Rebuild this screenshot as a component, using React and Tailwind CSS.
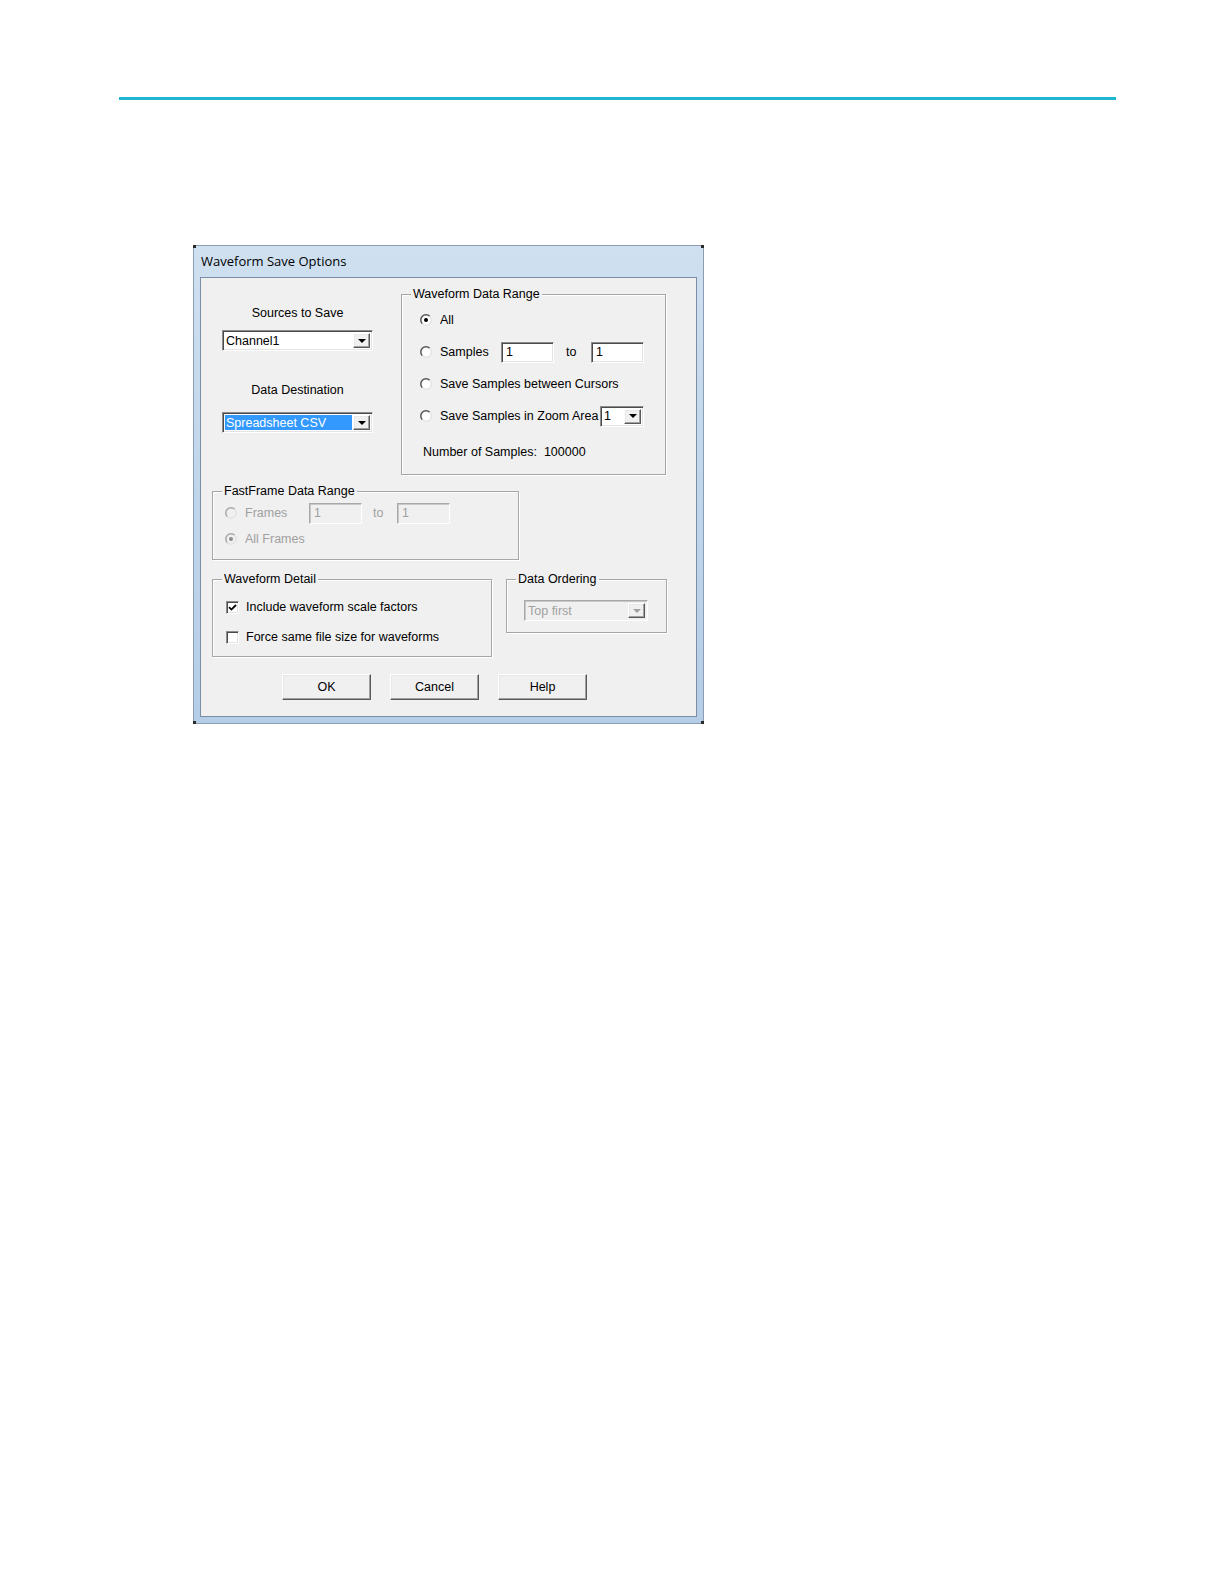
import React from "react";

const ui = { fontFamily: '"Liberation Sans", Arial, sans-serif' };
const title = { fontFamily: '"Open Sans", "Noto Sans", sans-serif' };

// classic win32 sunken edit field
const sunken =
  "border border-t-[#8c8c8c] border-l-[#8c8c8c] border-b-white border-r-white shadow-[inset_1px_1px_0_#4a4a4a,inset_-1px_-1px_0_#e3e3e3]";
const sunkenOff =
  "border border-t-[#a8a8a8] border-l-[#a8a8a8] border-b-white border-r-white shadow-[inset_1px_1px_0_#c8c8c8]";
const raised =
  "border border-t-white border-l-white border-b-[#5a5a5a] border-r-[#5a5a5a] shadow-[inset_-1px_-1px_0_#a0a0a0,inset_1px_1px_0_#e8e8e8]";

const Radio = ({ checked, disabled }) => (
  <svg width="12" height="12" viewBox="0 0 12 12" className="shrink-0">
    <circle cx="6" cy="6" r="5.2" fill={disabled ? "#f0f0f0" : "#fff"} />
    <path d="M2.32 9.68 A5.2 5.2 0 0 1 9.68 2.32" fill="none" stroke={disabled ? "#a8a8a8" : "#555"} strokeWidth="1.5" />
    <path d="M9.68 2.32 A5.2 5.2 0 0 1 2.32 9.68" fill="none" stroke="#dcdcdc" strokeWidth="1" />
    {checked && <circle cx="6" cy="6" r="2" fill={disabled ? "#8c8c8c" : "#000"} />}
  </svg>
);

const Check = ({ checked }) => (
  <div className={`w-[13px] h-[13px] bg-white shrink-0 ${sunken} flex items-center justify-center`}>
    {checked && (
      <svg width="9" height="9" viewBox="0 0 9 9">
        <polyline points="1,4.2 3.4,6.6 8,2" fill="none" stroke="#000" strokeWidth="1.8" />
      </svg>
    )}
  </div>
);

const Arrow = ({ disabled }) => (
  <svg width="8" height="4" viewBox="0 0 8 4">
    <polygon points="0,0 8,0 4,4" fill={disabled ? "#a0a0a0" : "#000"} />
  </svg>
);

const Combo = ({ value, width, selected, disabled }) => (
  <div
    className={`${disabled ? sunkenOff : sunken} ${disabled ? "bg-[#f0f0f0]" : "bg-white"} h-[21px] flex items-center p-[2px] ${width}`}
  >
    <div
      className={`flex-1 h-full flex items-center pl-[1px] ${selected ? "bg-[#3399ff] text-white" : disabled ? "text-[#a0a0a0]" : "text-black"}`}
    >
      {value}
    </div>
    <div className={`w-[17px] h-full ml-[1px] bg-[#f0f0f0] ${raised} flex items-center justify-center`}>
      <Arrow disabled={disabled} />
    </div>
  </div>
);

const Edit = ({ value, disabled }) => (
  <div
    className={`w-[53px] h-[21px] flex items-center pl-[4px] ${disabled ? `${sunkenOff} bg-[#f0f0f0] text-[#a0a0a0]` : `${sunken} bg-white text-black`}`}
  >
    {value}
  </div>
);

const Group = ({ label, className, children }) => (
  <div className={`relative border border-[#a6a6a6] shadow-[1px_1px_0_#fff,inset_1px_1px_0_#fff] ${className}`}>
    <span className="absolute -top-[8px] left-[9px] px-[2px] leading-[14px] bg-[#f0f0f0] text-black">{label}</span>
    {children}
  </div>
);

const Button = ({ children }) => (
  <button className={`w-[89px] h-[26px] bg-[#f0f0f0] ${raised} text-black`}>{children}</button>
);

export default function App() {
  return (
    <div className="bg-white">
      <div className="pt-[97px] pl-[119px]">
        <div className="w-[997px] h-[3px] bg-[#1fb5d5]" />
      </div>

      {/* dialog window */}
      <div
        className="relative ml-[193px] mt-[145px] w-[511px] border border-[#8a9db3] bg-gradient-to-b from-[#cfe0f0] via-[#c0d6eb] to-[#b5cde7] px-[6px] pb-[6px]"
        style={ui}
      >
        {/* dark corner pixels left by the window's rounded corners */}
        <span className="absolute -top-[1px] -left-[1px] w-[3px] h-[3px] bg-[#2a2a2a]" />
        <span className="absolute -top-[1px] -right-[1px] w-[3px] h-[3px] bg-[#2a2a2a]" />
        <span className="absolute -bottom-[1px] -left-[1px] w-[3px] h-[3px] bg-[#2a2a2a]" />
        <span className="absolute -bottom-[1px] -right-[1px] w-[3px] h-[3px] bg-[#2a2a2a]" />

        <div className="h-[31px] flex items-center pl-[1px] text-[13px] text-black" style={title}>
          Waveform Save Options
        </div>

        <div className="border border-[#7c8ea5] bg-[#f0f0f0] text-[12.5px] leading-[14px] flex flex-col">
          {/* row 1 */}
          <div className="flex items-start">
            <div className="ml-[21px] w-[151px] pt-[28px] flex flex-col">
              <div className="text-center text-black">Sources to Save</div>
              <div className="mt-[10px]">
                <Combo value="Channel1" width="w-[151px]" />
              </div>
              <div className="mt-[32px] text-center text-black">Data Destination</div>
              <div className="mt-[15px]">
                <Combo value="Spreadsheet CSV" width="w-[151px]" selected />
              </div>
            </div>

            <Group label="Waveform Data Range" className="ml-[28px] mt-[16px] w-[265px] h-[181px]">
              <div className="pl-[18px] pt-[14px] flex flex-col gap-[10px] text-black">
                <div className="h-[22px] flex items-center gap-[8px]">
                  <Radio checked />
                  <span>All</span>
                </div>
                <div className="h-[22px] flex items-center">
                  <Radio />
                  <span className="ml-[8px] w-[61px]">Samples</span>
                  <Edit value="1" />
                  <span className="ml-[12px] w-[25px]">to</span>
                  <Edit value="1" />
                </div>
                <div className="h-[22px] flex items-center gap-[8px]">
                  <Radio />
                  <span>Save Samples between Cursors</span>
                </div>
                <div className="h-[22px] flex items-center">
                  <Radio />
                  <span className="ml-[8px] w-[160px]">Save Samples in Zoom Area</span>
                  <Combo value="1" width="w-[44px]" />
                </div>
                <div className="ml-[3px] mt-[8px]">Number of Samples:&nbsp; 100000</div>
              </div>
            </Group>
          </div>

          {/* row 2 */}
          <Group label="FastFrame Data Range" className="ml-[11px] mt-[16px] w-[307px] h-[69px]">
            <div className="pl-[12px] pt-[11px] flex flex-col gap-[6px] text-[#a0a0a0]">
              <div className="h-[20px] flex items-center">
                <Radio disabled />
                <span className="ml-[8px] w-[64px]">Frames</span>
                <Edit value="1" disabled />
                <span className="ml-[11px] w-[24px]">to</span>
                <Edit value="1" disabled />
              </div>
              <div className="h-[20px] flex items-center gap-[8px]">
                <Radio checked disabled />
                <span>All Frames</span>
              </div>
            </div>
          </Group>

          {/* row 3 */}
          <div className="flex items-start ml-[11px] mt-[19px] gap-[14px]">
            <Group label="Waveform Detail" className="w-[280px] h-[78px]">
              <div className="pl-[13px] pt-[17px] flex flex-col gap-[10px] text-black">
                <div className="h-[20px] flex items-center gap-[7px]">
                  <Check checked />
                  <span>Include waveform scale factors</span>
                </div>
                <div className="h-[20px] flex items-center gap-[7px]">
                  <Check />
                  <span>Force same file size for waveforms</span>
                </div>
              </div>
            </Group>
            <Group label="Data Ordering" className="w-[161px] h-[54px]">
              <div className="pl-[17px] pt-[20px]">
                <Combo value="Top first" width="w-[124px]" disabled />
              </div>
            </Group>
          </div>

          {/* buttons */}
          <div className="flex ml-[81px] mt-[17px] mb-[16px] gap-[19px]">
            <Button>OK</Button>
            <Button>Cancel</Button>
            <Button>Help</Button>
          </div>
        </div>
      </div>
    </div>
  );
}
